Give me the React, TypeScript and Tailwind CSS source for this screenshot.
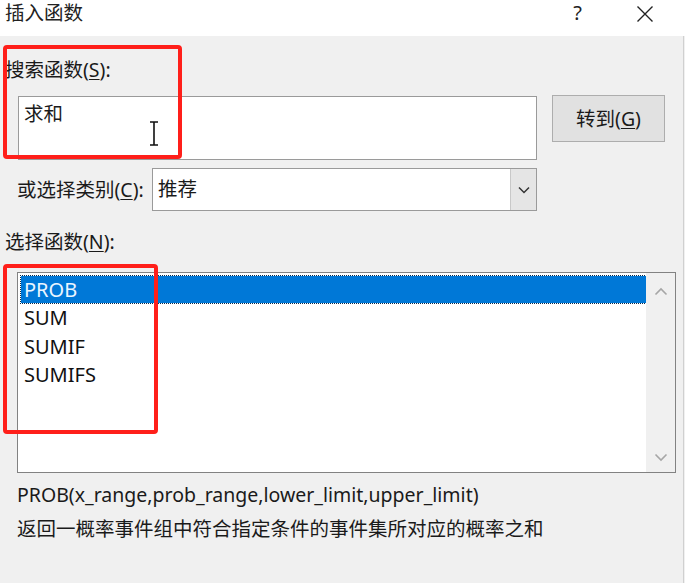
import React from "react";

const font = { fontFamily: '"Noto Sans", "Noto Sans CJK SC", sans-serif' };

const items = ["PROB", "SUM", "SUMIF", "SUMIFS"];

function Chevron({ dir }: { dir: "up" | "down" }) {
  return (
    <svg width="14" height="9" viewBox="0 0 14 9" className="block">
      <path
        d={dir === "up" ? "M1.5 7.5 L7 2 L12.5 7.5" : "M1.5 1.5 L7 7 L12.5 1.5"}
        fill="none"
        stroke="#a6a6a6"
        strokeWidth="1.6"
      />
    </svg>
  );
}

export default function App() {
  return (
    <div
      className="relative h-[583px] w-[685px] overflow-hidden bg-[#f0f0f0] text-[#1a1a1a]"
      style={font}
    >
      {/* title bar */}
      <div className="flex h-[36px] items-start bg-white pl-[5px] pt-[2px]">
        <span className="text-[19.5px] leading-[22px] text-[#222]">插入函数</span>
        <span className="ml-auto mr-[54px] text-[20px] leading-[22px] text-[#222]">?</span>
        <svg width="18" height="18" viewBox="0 0 18 18" className="mr-[31px] mt-[3px]">
          <path d="M1.5 1.5 L16.5 16.5 M16.5 1.5 L1.5 16.5" stroke="#222" strokeWidth="1.4" />
        </svg>
      </div>

      {/* body */}
      <div className="flex flex-col">
        <div className="mt-[22px] pl-[5px] text-[19.5px] leading-[24px]">
          搜索函数(<span className="underline underline-offset-2">S</span>):
        </div>

        <div className="mt-[14px] flex items-start pl-[18px]">
          <div className="relative h-[64px] w-[519px] border border-[#9a9a9a] bg-white">
            <span className="absolute left-[5px] top-[4px] text-[19.5px] leading-[26px]">求和</span>
            <svg
              width="10"
              height="25"
              viewBox="0 0 10 25"
              className="absolute left-[130px] top-[24px]"
            >
              <path d="M1 1 H9 M1 24 H9 M5 1 V24" stroke="#111" strokeWidth="1.6" fill="none" />
            </svg>
          </div>
          <button className="ml-[15px] mt-[-1px] h-[47px] w-[113px] border border-[#adadad] bg-[#e1e1e1] text-[19.5px] leading-[24px]">
            转到(<span className="underline underline-offset-2">G</span>)
          </button>
        </div>

        <div className="mt-[8px] flex items-center pl-[17px]">
          <span className="w-[135px] text-[19.5px] leading-[24px]">
            或选择类别(<span className="underline underline-offset-2">C</span>):
          </span>
          <div className="flex h-[43px] w-[385px] border border-[#9a9a9a] bg-white">
            <span className="flex-1 pl-[5px] text-[19.5px] leading-[40px]">推荐</span>
            <div className="flex w-[26px] items-center justify-center border-l border-[#c8c8c8] bg-[#e5e5e5]">
              <svg width="12" height="8" viewBox="0 0 12 8">
                <path d="M1 1.5 L6 6.5 L11 1.5" fill="none" stroke="#333" strokeWidth="1.5" />
              </svg>
            </div>
          </div>
        </div>

        <div className="mt-[19px] pl-[5px] text-[19.5px] leading-[24px]">
          选择函数(<span className="underline underline-offset-2">N</span>):
        </div>

        <div className="ml-[17px] mt-[18px] flex h-[201px] w-[659px] border border-[#828282] bg-white">
          <div className="flex flex-1 flex-col pl-[3px] pt-[3px]">
            {items.map((it, i) => (
              <div
                key={it}
                className={
                  i === 0
                    ? "h-[27px] bg-[#0078d7] pl-[3px] text-[20px] leading-[27px] text-[#eaf5ff] outline-1 outline-dotted outline-[#0b2a4a]"
                    : "h-[28.7px] pl-[3px] text-[20px] leading-[30px] text-[#111]"
                }
              >
                {it}
              </div>
            ))}
          </div>
          <div className="flex w-[29px] flex-col items-center justify-between bg-[#f0f0f0] pb-[10px] pt-[14px]">
            <Chevron dir="up" />
            <Chevron dir="down" />
          </div>
        </div>

        <div className="mt-[10px] pl-[17px] text-[19.5px] leading-[24px]">
          PROB(x_range,prob_range,lower_limit,upper_limit)
        </div>
        <div className="mt-[10px] pl-[17px] text-[19.5px] leading-[24px]">
          返回一概率事件组中符合指定条件的事件集所对应的概率之和
        </div>
      </div>

      {/* right window edge */}
      <div className="absolute right-[1px] top-[36px] h-[547px] w-px bg-[#d0d0d0]" />

      {/* red annotation boxes */}
      <div className="pointer-events-none absolute left-[3px] top-[45px] h-[114px] w-[179px] rounded-[4px] border-[4px] border-[#ff1f1a]" />
      <div className="pointer-events-none absolute left-[3px] top-[264px] h-[170px] w-[155px] rounded-[4px] border-[4px] border-[#ff1f1a]" />
    </div>
  );
}
